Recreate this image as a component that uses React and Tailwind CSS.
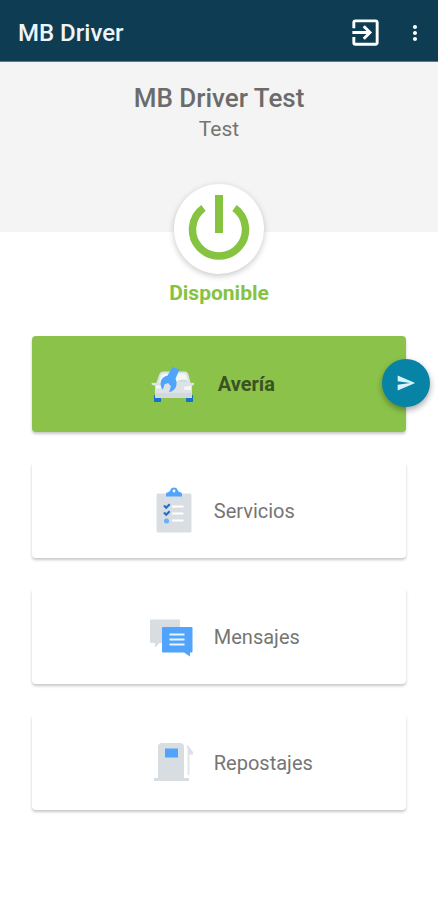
import { useState } from "react";
import { MdExitToApp, MdMoreVert, MdSend } from "react-icons/md";

function PowerIcon() {
  return (
    <svg viewBox="0 0 90 90" className="w-full h-full" fill="none" stroke="#85c341" aria-hidden="true">
      <path d="M29.500 24a26.500 26.500 0 1 0 31 0" strokeWidth="7.5" />
      <path d="M45 11v38" strokeWidth="8" />
    </svg>
  );
}

function CarIcon() {
  return (
    <svg viewBox="-2 0 44 44" className="w-11 h-11" aria-hidden="true">
      <path d="M2 33h7v7H2zM34 33h7v7h-7z" fill="#1672cf" />
      <path
        d="M11 9.500h22q2.500 0 3.200 2.500l2.500 9 3.300-.3v2l-2 1V35q0 1-1 1H4q-1 0-1-1V23.700l-3.300-1v-2l4.500.3L7.500 12q.7-2.500 3.500-2.500z"
        fill="#dde2e6"
      />
      <path d="M24 11.500h8q1.500 0 2 1.500l2.300 7.500H23z" fill="#f2f8f4" />
      <path d="M9 13l3.500-1.500h6L13 16l-4 5-2-.5z" fill="#f2f8f4" />
      <path d="M24 20.500q5-4.500 11.500-2l.8 2z" fill="#d3d9dd" />
      <path d="M4 23.500h5v3H4zM39 23.500l-7 1.500v3h7z" fill="#f5f6f7" />
      <path d="M3 31h37v4q0 1-1 1H4q-1 0-1-1z" fill="#d3d8dc" />
      <path
        d="M20.500 5l7 2.500-4 9.200c1.800 3.300 1.400 7.800-1.200 10.500-1.300 1.500-3.200 2.600-5.200 2.800l1.800-5.700-2.800-3.200-3.500 1.200-1.800 5.400c-3-3.600-2.900-8.700 0-11.600 1.300-1.300 2.900-2.100 4.600-2.400z"
        fill="#51a4fb"
      />
    </svg>
  );
}

function ClipboardIcon() {
  return (
    <svg viewBox="-1 0 44 48" className="w-11 h-12" aria-hidden="true">
      <rect x="5.500" y="6.500" width="35" height="39" rx="1.500" fill="#d9dee2" />
      <path
        d="M15 9.500V7q0-1.500 2-1.700 2-.3 2.300-2.300a4 4 0 0 1 7.400 0q.3 2 2.500 2.300 1.800.3 1.800 1.700v2.500z"
        fill="#51a4fb"
      />
      <circle cx="23" cy="4" r="1.400" fill="#fff" />
      <path d="M13 18.500l2.200 2.200 3.500-3.500M13 25.500l2.200 2.200 3.500-3.500" stroke="#256fca" strokeWidth="2.200" fill="none" />
      <circle cx="15.500" cy="34" r="2.500" fill="#69affa" />
      <path d="M21 19.500h11.500M21 26.500h11.500M21 33.500h11.500" stroke="#fff" strokeWidth="2" />
    </svg>
  );
}

function ChatIcon() {
  return (
    <svg viewBox="0 1 44 44" className="w-11 h-11" aria-hidden="true">
      <path d="M1 5.500h28q1 0 1 1V29H9.500L5 33.500V29H1q-1 0-1-1V6.500q0-1 1-1z" fill="#d8dde1" />
      <path d="M13 13h28.500q1 0 1 1v23.500q0 1-1 1H40v4L34 38.500H13q-1 0-1-1V14q0-1 1-1z" fill="#51a4fb" />
      <path d="M19.500 20.500h15M19.500 25.500h15M19.500 30.500h15" stroke="#e9f4ff" strokeWidth="2.200" />
    </svg>
  );
}

function FuelIcon() {
  return (
    <svg viewBox="0 1 44 44" className="w-11 h-11" aria-hidden="true">
      <path d="M8 7q0-4 4-4h18q4 0 4 4v31h5v3H4v-3h4z" fill="#d8dde1" />
      <rect x="15" y="8.500" width="13" height="9" fill="#51a4fb" />
      <path d="M37 6l1.500 2v27" stroke="#e2e5e8" strokeWidth="2" fill="none" />
      <path d="M37.500 5l5.500 7v2.500h-4z" fill="#dce0e4" />
    </svg>
  );
}

const options = [
  { name: "Avería", icon: <CarIcon />, active: true },
  { name: "Servicios", icon: <ClipboardIcon /> },
  { name: "Mensajes", icon: <ChatIcon /> },
  { name: "Repostajes", icon: <FuelIcon /> },
];

export default function App() {
  const [available, setAvailable] = useState(true);

  return (
    <div className="min-h-screen bg-white font-['Roboto',sans-serif] text-[#757575]">
      <header className="flex items-center h-[62px] pt-1 pl-[18px] pr-[11px] bg-[#0e3d53] text-white border-b border-[#60798a]">
        <h1 className="flex-1 text-2xl font-medium text-[#eef5f8]">MB Driver</h1>
        <button type="button" aria-label="Salir" className="mr-5">
          <MdExitToApp size={35} />
        </button>
        <button type="button" aria-label="Más opciones">
          <MdMoreVert size={24} />
        </button>
      </header>

      <section className="h-[170px] pt-5 bg-[#f4f4f4] text-center">
        <h2 className="text-[26px] leading-8 font-medium text-[#6b6b6b]">MB Driver Test</h2>
        <p className="text-[21px] leading-[30px]">Test</p>
      </section>

      <div className="flex flex-col items-center -mt-12">
        <button
          type="button"
          aria-label="Cambiar disponibilidad"
          onClick={() => setAvailable(!available)}
          className="w-[90px] h-[90px] rounded-full bg-white shadow-[0_2px_6px_rgba(0,0,0,0.22)]"
        >
          <PowerIcon />
        </button>
        <p className="mt-[5px] text-[21px] leading-7 font-bold text-[#85c341]">
          {available ? "Disponible" : "No disponible"}
        </p>
      </div>

      <main className="relative flex flex-col gap-[30px] px-8 pt-[29px] pb-10">
        {options.map((option) => (
          <button
            key={option.name}
            type="button"
            className={
              option.active
                ? "flex items-center gap-6 h-24 pl-[31.5%] rounded bg-[#8bc34a] text-[#3c5220] text-xl font-bold shadow-[0_2px_3px_rgba(0,0,0,0.22)]"
                : "flex items-center gap-5 h-24 pt-px pl-[31.5%] rounded bg-white text-xl shadow-[0_2px_3px_rgba(0,0,0,0.22)]"
            }
          >
            {option.icon}
            <span>{option.name}</span>
          </button>
        ))}

        {/* floating send button over the first card */}
        <button
          type="button"
          aria-label="Enviar"
          className="absolute top-[52px] right-2 flex items-center justify-center w-12 h-12 rounded-full bg-[#0783a6] text-[#d9f3fb] shadow-[0_3px_6px_rgba(0,0,0,0.35)]"
        >
          <MdSend size={20} />
        </button>
      </main>
    </div>
  );
}
